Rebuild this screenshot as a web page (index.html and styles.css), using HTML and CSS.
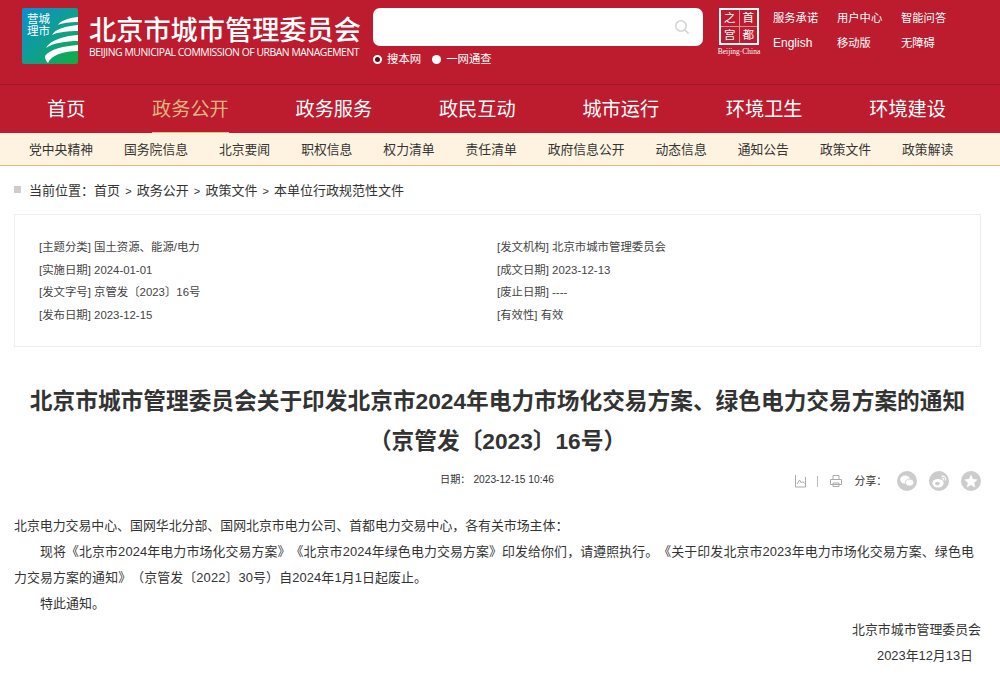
FILE: index.html
```html
<!DOCTYPE html>
<html lang="zh-CN">
<head>
    <meta charset="UTF-8">
    <title>北京市城市管理委员会</title>
    <link rel="stylesheet" href="styles.css">
</head>
<body>
    <header class="top">
        <svg class="logo" width="56" height="56" viewBox="0 0 56 56">
            <defs>
                <linearGradient id="logoBg" x1="0" y1="0" x2="1" y2="1">
                    <stop offset="0" stop-color="#0a8fd0"/>
                    <stop offset="0.55" stop-color="#0fa08c"/>
                    <stop offset="1" stop-color="#10ad3c"/>
                </linearGradient>
            </defs>
            <rect width="56" height="56" rx="2" fill="url(#logoBg)"/>
            <text class="logo-text" x="5" y="15">营城</text>
            <text class="logo-text" x="5" y="27">理市</text>
            <path d="M56 9 C46 10 38 13 36 17 C40 15 48 14 56 14Z" fill="#fff"/>
            <path d="M56 17 C44 18 33 21 30 27 C36 24 46 23 56 23Z" fill="#fff"/>
            <path d="M56 27 C42 28 28 32 24 40 C31 35 44 33 56 33Z" fill="#fff"/>
            <path d="M56 37 C42 38 28 41 23 48 C23 51 24 53 26 55 C29 47 42 43 56 43Z" fill="#fff"/>
        </svg>
        <div class="brand">
            <div class="brand-cn">北京市城市管理委员会</div>
            <div class="brand-en">BEIJING MUNICIPAL COMMISSION OF URBAN MANAGEMENT</div>
        </div>
        <div class="search">
            <div class="search-box">
                <svg width="16" height="16" viewBox="0 0 16 16" fill="none" stroke="#d4d4d4" stroke-width="1.6">
                    <circle cx="7" cy="7" r="5.2"/>
                    <path d="M11 11l3.6 3.6"/>
                </svg>
            </div>
            <div class="search-scope">
                <span class="scope"><i class="radio radio-on"></i>搜本网</span>
                <span class="scope"><i class="radio"></i>一网通查</span>
            </div>
        </div>
        <div class="capital">
            <div class="capital-grid">
                <span>之</span><span>首</span><span>宫</span><span>都</span>
            </div>
            <div class="capital-en">Beijing·China</div>
        </div>
        <div class="top-links">
            <a>服务承诺</a><a>用户中心</a><a>智能问答</a>
            <a class="link-en">English</a><a>移动版</a><a>无障碍</a>
        </div>
    </header>

    <nav class="nav">
        <a>首页</a>
        <a class="active">政务公开</a>
        <a>政务服务</a>
        <a>政民互动</a>
        <a>城市运行</a>
        <a>环境卫生</a>
        <a>环境建设</a>
    </nav>

    <div class="subnav">
        <a>党中央精神</a>
        <a>国务院信息</a>
        <a>北京要闻</a>
        <a>职权信息</a>
        <a>权力清单</a>
        <a>责任清单</a>
        <a>政府信息公开</a>
        <a>动态信息</a>
        <a>通知公告</a>
        <a>政策文件</a>
        <a>政策解读</a>
    </div>

    <main class="main">
        <div class="crumb">
            <i class="crumb-mark"></i>
            <span>当前位置：首页<i class="crumb-sep">&gt;</i>政务公开<i class="crumb-sep">&gt;</i>政策文件<i class="crumb-sep">&gt;</i>本单位行政规范性文件</span>
        </div>

        <div class="meta">
            <div>[主题分类] 国土资源、能源/电力</div>
            <div>[发文机构] 北京市城市管理委员会</div>
            <div>[实施日期] 2024-01-01</div>
            <div>[成文日期] 2023-12-13</div>
            <div>[发文字号] 京管发〔2023〕16号</div>
            <div>[废止日期] ----</div>
            <div>[发布日期] 2023-12-15</div>
            <div>[有效性] 有效</div>
        </div>

        <h1 class="title">北京市城市管理委员会关于印发北京市2024年电力市场化交易方案、绿色电力交易方案的通知<br>（京管发〔2023〕16号）</h1>

        <div class="info">
            <div class="info-date">日期：&nbsp;2023-12-15 10:46</div>
            <div class="tools">
                <svg width="11" height="14" viewBox="0 0 11 14" fill="none" stroke="#aaa">
                    <path d="M.5 1v12h10V3"/>
                    <path d="M2 10l2.5-4 2 3 1.5-1.5 1.5 2"/>
                </svg>
                <i class="tool-sep"></i>
                <svg width="12" height="14" viewBox="0 0 12 14" fill="none" stroke="#aaa">
                    <path d="M3 5V1.5h6V5M.5 5.5h11v5H.5zM3 9h6v3.5H3z"/>
                </svg>
                <span class="share-label">分享：</span>
                <span class="share">
                    <svg width="14" height="12" viewBox="0 0 14 12" fill="#fff">
                        <ellipse cx="5.2" cy="4.6" rx="5" ry="4.2"/>
                        <ellipse cx="9.6" cy="7.6" rx="4.2" ry="3.4" stroke="#ccc" stroke-width="0.8"/>
                    </svg>
                </span>
                <span class="share">
                    <svg width="15" height="13" viewBox="0 0 15 13" fill="none">
                        <ellipse cx="6" cy="8.2" rx="5.6" ry="4.2" fill="#fff"/>
                        <ellipse cx="5.4" cy="8.6" rx="2.3" ry="1.8" fill="#ccc"/>
                        <path d="M9.5 1.2c2.6-.4 4.8 1.6 4.2 4.4M9.8 3.4c1.2-.2 2.2.8 1.9 2" stroke="#fff" stroke-width="1.1"/>
                    </svg>
                </span>
                <span class="share">
                    <svg width="14" height="14" viewBox="0 0 14 14" fill="#fff">
                        <path d="M7 .6l2 4.4 4.7.5-3.5 3.2 1 4.7L7 11l-4.2 2.4 1-4.7L.3 5.5 5 5z"/>
                    </svg>
                </span>
            </div>
        </div>

        <div class="article">
            <p>北京电力交易中心、国网华北分部、国网北京市电力公司、首都电力交易中心，各有关市场主体：</p>
            <p class="indent">现将《北京市2024年电力市场化交易方案》《北京市2024年绿色电力交易方案》印发给你们，请遵照执行。《关于印发北京市2023年电力市场化交易方案、绿色电力交易方案的通知》（京管发〔2022〕30号）自2024年1月1日起废止。</p>
            <p class="indent">特此通知。</p>
            <p class="sign">北京市城市管理委员会</p>
            <p class="sign sign-date">2023年12月13日</p>
        </div>
    </main>
</body>
</html>
```

FILE: styles.css
```css
* {
    margin: 0;
    padding: 0;
    box-sizing: border-box;
}

body {
    font-family: "Liberation Sans", "Noto Sans CJK SC", sans-serif;
    background: #fff;
    color: #333;
    font-size: 13px;
    text-spacing-trim: space-all;
}

i {
    font-style: normal;
}

.top {
    height: 85px;
    padding: 8px 0 0 22px;
    background: #bc1c2e;
    border-bottom: 1px solid #9c1728;
    display: flex;
    align-items: flex-start;
    color: #fff;
}

.logo {
    flex: none;
}

.logo-text {
    font-size: 11.5px;
    fill: #fff;
}

.brand {
    width: 284px;
    margin-left: 11px;
    padding-top: 7px;
}

.brand-cn {
    font-size: 27.2px;
    line-height: 32px;
    font-weight: 500;
    white-space: nowrap;
}

.brand-en {
    margin-top: -1px;
    font-family: "Open Sans", sans-serif;
    font-size: 10.4px;
    line-height: 13px;
    letter-spacing: -0.47px;
    white-space: nowrap;
}

.search {
    width: 330px;
}

.search-box {
    height: 38px;
    padding-right: 13px;
    background: #fff;
    border-radius: 7px;
    display: flex;
    align-items: center;
    justify-content: flex-end;
}

.search-scope {
    margin-top: 6px;
    display: flex;
    gap: 11px;
    font-size: 11.4px;
    line-height: 14px;
}

.scope {
    display: flex;
    align-items: center;
    gap: 5px;
}

.radio {
    width: 9px;
    height: 9px;
    border-radius: 50%;
    background: #fff;
}

.radio-on {
    background: #5a0d16;
    border: 2px solid #fff;
}

.capital {
    width: 44px;
    margin-left: 14px;
    text-align: center;
}

.capital-grid {
    width: 40px;
    height: 37px;
    margin-left: 2px;
    border: 2px solid #fff;
    display: grid;
    grid-template-columns: 1fr 1fr;
    grid-template-rows: 1fr 1fr;
    gap: 1px;
    background: #e08a92;
    font-size: 11.5px;
    line-height: 16px;
}

.capital-grid span {
    background: #bc1c2e;
    overflow: hidden;
}

.capital-en {
    margin-top: 2px;
    font-family: "Liberation Serif", serif;
    font-size: 7.5px;
    line-height: 9px;
    white-space: nowrap;
}

.top-links {
    width: 192px;
    margin-left: 12px;
    padding-top: 3px;
    display: grid;
    grid-template-columns: repeat(3, 64px);
    grid-auto-rows: 25px;
    font-size: 11.3px;
    line-height: 15px;
}

.link-en {
    font-size: 12px;
}

.nav {
    height: 48px;
    padding: 0 54px 0 47px;
    background: #bc1c2e;
    display: flex;
    justify-content: space-between;
    color: #fff;
    font-size: 19.2px;
    line-height: 49px;
}

.nav a {
    height: 48px;
}

.nav .active {
    color: #e0b57e;
    border-bottom: 1px solid #e5c189;
}

.subnav {
    height: 33px;
    padding: 0 29px;
    background: #fdf3e0;
    border-bottom: 1px solid #e3be78;
    display: flex;
    gap: 31px;
    font-size: 12.8px;
    line-height: 33px;
    color: #333;
}

.main {
    padding: 0 19px 0 14px;
}

.crumb {
    height: 46px;
    display: flex;
    align-items: center;
    gap: 8px;
    font-size: 13px;
}

.crumb-mark {
    width: 7px;
    height: 7px;
    background: #ccc;
}

.crumb-sep {
    display: inline-block;
    width: 16.7px;
    text-align: center;
    font-size: 11px;
}

.meta {
    height: 133px;
    margin-top: 2px;
    padding: 21px 24px 0;
    border: 1px solid #eeeee8;
    display: grid;
    grid-template-columns: 458px 1fr;
    grid-auto-rows: 22.6px;
    font-size: 11.4px;
    line-height: 22px;
    color: #444;
}

.title {
    margin-top: 34px;
    text-align: center;
    font-size: 22.7px;
    line-height: 40px;
    font-weight: 700;
    color: #333;
}

.info {
    height: 40px;
    position: relative;
    display: flex;
    align-items: center;
    justify-content: flex-end;
}

.info-date {
    position: absolute;
    left: 426px;
    top: 11px;
    font-size: 10.2px;
    line-height: 16px;
}

.tools {
    display: flex;
    align-items: center;
}

.tool-sep {
    width: 1px;
    height: 11px;
    margin: 0 12px 0 11px;
    background: #bbb;
}

.share-label {
    margin-left: 13px;
    margin-right: 10px;
    font-size: 10.8px;
    line-height: 16px;
}

.share {
    width: 20px;
    height: 20px;
    margin-right: 12px;
    border-radius: 50%;
    background: #ccc;
    display: flex;
    align-items: center;
    justify-content: center;
}

.share:last-child {
    margin-right: 0;
}

.article {
    margin-top: 12px;
    font-size: 12.9px;
    line-height: 26px;
    color: #333;
}

.indent {
    text-indent: 26px;
    letter-spacing: 0.13px;
}

.sign {
    text-align: right;
}

.sign-date {
    padding-right: 8px;
}
```
